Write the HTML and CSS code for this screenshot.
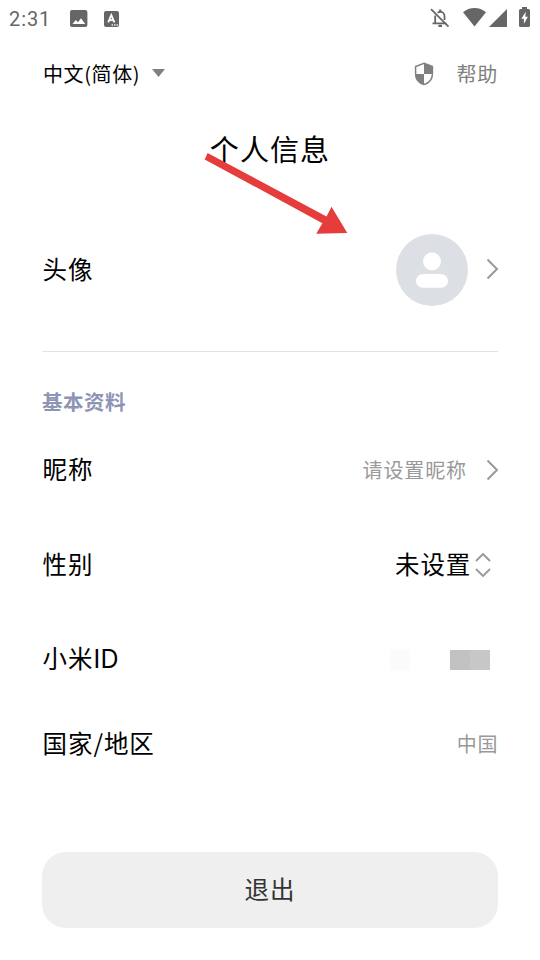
FILE: index.html
```html
<!DOCTYPE html>
<html lang="zh-CN">
<head>
<meta charset="utf-8">
<title>个人信息</title>
<link rel="stylesheet" href="styles.css">
</head>
<body>
<div class="status">
  <span class="time">2:31</span>
  <svg class="picture" width="18" height="18" viewBox="0 0 18 18"><rect width="17.4" height="17" rx="2" fill="#666"/><path d="M2.5 14l3.3-4.1 2.2 2.4 3-4 4.2 5.7z" fill="#fff"/></svg>
  <svg class="lang-box" width="15" height="16" viewBox="0 0 15 16"><rect width="15" height="16" rx="2" fill="#666"/><path d="M4.200 11.300L7.300 4l3.100 7.300M5.300 9.100h4" fill="none" stroke="#fff" stroke-width="1.800"/><path d="M7.600 14h1.300M10.100 14h1.300M12.500 14h1.300" stroke="#fff" stroke-width="1.300"/></svg>
  <svg class="bell" width="20" height="20" viewBox="0 0 20 20" fill="none" stroke="#666"><path d="M5.200 7.500v7.200M2.500 15.300h13.800M14.500 12V8.200c0-2.700-1.700-4.300-4.300-4.300-1 0-1.900.3-2.600.8" stroke-width="1.800"/><path d="M10.200 4V1.500M8.400 17.800h3.600" stroke-width="2.200"/><path d="M1 1.200L18.500 18.700" stroke-width="1.700"/></svg>
  <svg class="wifi" width="23" height="19" viewBox="0 0 23 19"><path d="M0 4.300C6.300-1.400 16.700-1.400 23 4.300L11.500 18.600z" fill="#666"/></svg>
  <svg class="signal" width="18" height="18" viewBox="0 0 18 18"><path d="M0 18L18 0v18z" fill="#666"/></svg>
  <svg class="battery" width="11" height="20" viewBox="0 0 11 20"><path d="M3 0h5v2h1.500Q11 2 11 3.500v15Q11 20 9.500 20h-8Q0 20 0 18.500v-15Q0 2 1.500 2H3z" fill="#666"/><path d="M6.800 4.800L2.300 11.700h2.600v5L8.900 9.700H6.300z" fill="#fff"/></svg>
</div>
<header class="top">
  <span class="language">中文(简体)</span>
  <svg class="caret" width="13" height="8" viewBox="0 0 13 8"><path d="M0 0h13L6.500 8z" fill="#808080"/></svg>
  <svg class="shield" width="20" height="24" viewBox="0 0 20 24"><path d="M10 1.200l8.400 3.300V12H10zM10 12v10.600C4.800 20.900 1.600 17 1.600 12z" fill="#808080"/><path d="M10 1.200L18.400 4.500V12c0 5-3.200 8.900-8.400 10.600C4.800 20.900 1.600 17 1.600 12V4.500z" fill="none" stroke="#808080" stroke-width="1.500"/></svg>
  <span class="help">帮助</span>
</header>
<h1 class="title">个人信息
  <svg class="arrow" width="150" height="90" viewBox="0 0 150 90"><path d="M7.600 3L126.500 66.400l5-9.700L147.300 83l-31.100.8 6.200-10.600L4.700 9.400z" fill="#e53c3c"/></svg>
</h1>
<main class="content">
  <div class="row row-avatar">
    <span class="label">头像</span>
    <svg class="avatar" width="72" height="72" viewBox="0 0 72 72"><circle cx="36" cy="36" r="36" fill="#dcdfe4"/><circle cx="36" cy="27.300" r="9" fill="#fff"/><rect x="20" y="40" width="32" height="13.800" rx="6.900" fill="#fff"/></svg>
    <svg class="chevron" width="13" height="22" viewBox="0 0 13 22"><path d="M1.500 1.500L11 11l-9.500 9.500" fill="none" stroke="#999" stroke-width="2"/></svg>
  </div>
  <h2 class="section">基本资料</h2>
  <div class="row row-name">
    <span class="label">昵称</span>
    <span class="hint">请设置昵称</span>
    <svg class="chevron" width="13" height="22" viewBox="0 0 13 22"><path d="M1.500 1.500L11 11l-9.500 9.500" fill="none" stroke="#999" stroke-width="2"/></svg>
  </div>
  <div class="row row-gender">
    <span class="label">性别</span>
    <span class="value">未设置</span>
    <svg class="updown" width="16" height="24" viewBox="0 0 16 24"><path d="M1 8l7-7 7 7M1 16l7 7 7-7" fill="none" stroke="#999" stroke-width="1.900"/></svg>
  </div>
  <div class="row row-id">
    <span class="label">小米<span class="latin">ID</span></span>
    <span class="mask"><i class="faint"></i><i class="dark"></i><i class="mid"></i></span>
  </div>
  <div class="row row-region">
    <span class="label">国家/地区</span>
    <span class="hint country">中国</span>
  </div>
  <button class="logout">退出</button>
</main>
</body>
</html>
```

FILE: styles.css
```css
* { box-sizing: border-box; }
body {
  margin: 0;
  width: 540px;
  height: 960px;
  overflow: hidden;
  background: #fff;
  color: #000;
  font-family: "Noto Sans CJK SC", sans-serif;
}
svg { display: block; flex: none; }
.status { display: flex; align-items: center; height: 36px; padding: 0 10px 0 9px; }
.time { width: 60px; font: 20px/36px Roboto, sans-serif; letter-spacing: 0.9px; color: #666; padding-top: 1px; }
.picture { margin-top: 2px; margin-left: 0.5px; }
.lang-box { margin: 1px auto 0 16.5px; }
.bell { margin-right: 13px; }
.wifi { margin-right: 3px; margin-top: -1px; }
.signal { margin-right: 12px; }
.battery { margin-top: -2px; }
.top { display: flex; align-items: center; height: 76px; padding: 0 42px 0 43px; font-size: 20px; line-height: 30px; }
.language { letter-spacing: 0.6px; margin-top: -1px; }
.caret { margin: -2px auto 0 12px; }
.shield { margin-right: 22px; }
.help { color: #808080; letter-spacing: 0.8px; }
.title { position: relative; margin: 0; height: 74px; text-align: center; font-size: 29px; line-height: 72px; font-weight: 400; letter-spacing: 1.1px; }
.arrow { position: absolute; left: 200px; top: 38px; }
.content { padding: 0 42px; }
.row { display: flex; align-items: center; font-size: 24.5px; line-height: 36px; }
.label { margin-right: auto; padding-left: 0.6px; letter-spacing: 0.9px; }
.latin { font-family: Inter, sans-serif; font-size: 25px; letter-spacing: 0.3px; }
.row-avatar { height: 166px; border-bottom: 1px solid #e3e3e3; }
.avatar { position: relative; top: 1px; left: 1px; }
.chevron { margin-left: 18px; position: relative; top: 0.5px; left: 0.5px; }
.section { margin: 0; height: 67px; padding-top: 34px; font-size: 20.5px; line-height: 30px; font-weight: 700; letter-spacing: 0.5px; color: #8e94b4; }
.row-name { height: 101px; }
.row-name .label, .row-gender .label, .row-id .label { margin-top: -2px; }
.row-name .hint { margin-right: -1px; }
.row-name .chevron { margin-left: 19px; }
.row-gender { height: 89px; padding-right: 7px; }
.row-id { height: 100px; padding-right: 8px; }
.row-region { height: 69px; }
.row-region .label { margin-top: -2px; }
.hint { font-size: 20px; color: #999; letter-spacing: 0.9px; }
.country { letter-spacing: 0.6px; }
.value { letter-spacing: 0.8px; margin: -2px 4px 0 0; }
.mask { display: flex; height: 20px; margin-top: 1px; }
.mask i { width: 20px; }
.mask .faint { background: #fbfbfb; margin-right: 40px; }
.mask .dark { background: #c2c2c2; }
.mask .mid { background: #c7c7c7; }
.logout { display: block; width: 456px; height: 76px; margin: 74px 0 0; padding: 0 0 2px; border: 0; border-radius: 24px; background: #efefef; color: #333; font: 24.5px/36px "Noto Sans CJK SC", sans-serif; letter-spacing: 1px; }
```
